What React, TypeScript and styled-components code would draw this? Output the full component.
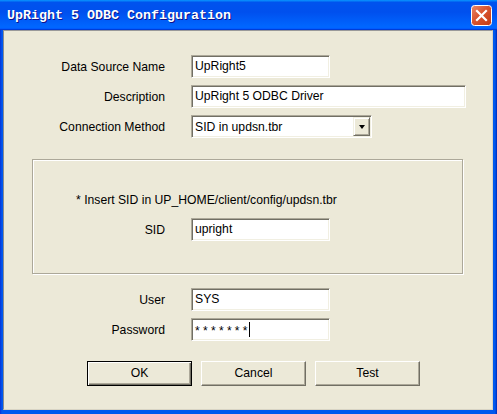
import React from 'react';
import styled, { createGlobalStyle } from 'styled-components';

const GlobalStyle = createGlobalStyle`
    html, body {
        margin: 0;
        padding: 0;
        background: #ffffff;
    }
    body {
        font-family: "Liberation Sans", Arial, sans-serif;
        font-size: 12.2px;
        color: #000;
    }
`;

const Window = styled.div`
    width: 497px;
    height: 414px;
    display: flex;
    flex-direction: column;
    box-sizing: border-box;
    background: #0846d8;
    box-shadow: inset 1px 0 #0a2fb8, inset -1px 0 #001a9e, inset 0 -1px #001a9e;
`;

const TitleBar = styled.div`
    height: 30px;
    flex: none;
    display: flex;
    align-items: center;
    justify-content: space-between;
    padding: 0 5px 0 7px;
    box-sizing: border-box;
    background: linear-gradient(
        180deg,
        #0997ff,
        #0053ee 8%,
        #0050ee 40%,
        #0066ff 88%,
        #0066ff 93%,
        #005bff 95%,
        #003dd7 96%,
        #003dd7
    );
`;

const Title = styled.span`
    font-family: "Liberation Mono", "Courier New", monospace;
    font-weight: bold;
    font-size: 13.33px;
    color: #ffffff;
    text-shadow: 1px 1px #0f1089;
    padding-top: 1px;
`;

const CloseButton = styled.div`
    width: 21px;
    height: 21px;
    display: flex;
    margin-top: 1px;
`;

const Frame = styled.div`
    flex: 1;
    display: flex;
    padding: 0 4px 4px 3px;
    background: linear-gradient(90deg, #0831d9, #0058ee 2px, #0058ee calc(100% - 2px), #0029b8);
`;

const Client = styled.div`
    flex: 1;
    display: flex;
    flex-direction: column;
    background: #ece9d8;
    border-left: 1px solid #8b8b8b;
    border-top: 1px solid #9a9a9a;
    border-right: 1px solid #d8d4c4;
    border-bottom: 1px solid #d8d4c4;
    padding-top: 24px;
`;

const FieldGrid = styled.div<{ $labelWidth: number }>`
    display: grid;
    grid-template-columns: ${({ $labelWidth }) => $labelWidth}px auto;
    column-gap: 26px;
    row-gap: 7px;
    align-items: center;
    justify-items: start;
`;

const Label = styled.div`
    justify-self: end;
    white-space: nowrap;
`;

const TextBox = styled.div<{ $width: number }>`
    width: ${({ $width }) => $width}px;
    height: 23px;
    box-sizing: border-box;
    display: flex;
    align-items: center;
    padding: 0 3px 1px;
    background: #ffffff;
    border: 1px solid;
    border-color: #aca899 #ffffff #ffffff #aca899;
    box-shadow: inset 1px 1px #716f64, inset -1px -1px #f1efe2;
    white-space: nowrap;
`;

const Masked = styled.span`
    letter-spacing: 3.3px;
    font-size: 12px;
    padding-top: 3px;
`;

const Caret = styled.span`
    width: 1px;
    height: 15px;
    background: #000;
    margin-left: -2px;
`;

const Combo = styled(TextBox)`
    justify-content: space-between;
    padding: 0 1px 0 3px;
`;

const DropButton = styled.div`
    width: 17px;
    height: 19px;
    box-sizing: border-box;
    display: flex;
    align-items: center;
    justify-content: center;
    background: #ece9d8;
    border: 1px solid;
    border-color: #f1efe2 #716f64 #716f64 #f1efe2;
    box-shadow: inset 1px 1px #ffffff, inset -1px -1px #aca899;
`;

const Arrow = styled.div`
    width: 0;
    height: 0;
    border-left: 3.5px solid transparent;
    border-right: 3.5px solid transparent;
    border-top: 4px solid #000;
    margin-top: 1px;
`;

const GroupBox = styled.div`
    margin: 21px 29px 0 28px;
    height: 115px;
    box-sizing: border-box;
    border: 1px solid #aca899;
    box-shadow: inset 1px 1px #ffffff, 1px 1px #ffffff;
    padding-top: 33px;
    display: flex;
    flex-direction: column;
`;

const Note = styled.div`
    padding-left: 43px;
    line-height: 14px;
    margin-bottom: 11px;
    white-space: nowrap;
`;

const Section = styled.div<{ $top: number }>`
    margin-top: ${({ $top }) => $top}px;
`;

const ButtonBar = styled.div`
    display: flex;
    gap: 9px;
    margin: 20px 0 0 83px;
`;

const PushButton = styled.div<{ $default?: boolean }>`
    width: 105px;
    height: 25px;
    box-sizing: border-box;
    display: flex;
    align-items: center;
    justify-content: center;
    background: #ece9d8;
    border: 1px solid;
    border-color: ${({ $default }) =>
        $default ? '#000000' : '#ffffff #716f64 #716f64 #ffffff'};
    box-shadow: ${({ $default }) =>
        $default
            ? 'inset 1px 1px #ffffff, inset -1px -1px #716f64, inset -2px -2px #aca899'
            : 'inset -1px -1px #aca899'};
    padding-bottom: 1px;
`;

const CloseIcon = () => (
    <svg width="21" height="21" viewBox="0 0 21 21">
        <defs>
            <linearGradient id="closeFill" x1="0" y1="0" x2="1" y2="1">
                <stop offset="0" stopColor="#e8896a" />
                <stop offset="0.45" stopColor="#d9552f" />
                <stop offset="1" stopColor="#c23a14" />
            </linearGradient>
        </defs>
        <rect x="0.5" y="0.5" width="20" height="20" rx="3" fill="url(#closeFill)" stroke="#ffffff" />
        <path d="M6 6 L15 15 M15 6 L6 15" stroke="#ffffff" strokeWidth="2.2" strokeLinecap="square" />
    </svg>
);

const App: React.FC = () => {
    return (
        <>
            <GlobalStyle />
            <Window>
                <TitleBar>
                    <Title>UpRight 5 ODBC Configuration</Title>
                    <CloseButton>
                        <CloseIcon />
                    </CloseButton>
                </TitleBar>
                <Frame>
                    <Client>
                        <FieldGrid $labelWidth={161}>
                            <Label>Data Source Name</Label>
                            <TextBox $width={139}>UpRight5</TextBox>
                            <Label>Description</Label>
                            <TextBox $width={275}>UpRight 5 ODBC Driver</TextBox>
                            <Label>Connection Method</Label>
                            <Combo $width={181}>
                                <span>SID in updsn.tbr</span>
                                <DropButton>
                                    <Arrow />
                                </DropButton>
                            </Combo>
                        </FieldGrid>
                        <GroupBox>
                            <Note>* Insert SID in UP_HOME/client/config/updsn.tbr</Note>
                            <FieldGrid $labelWidth={132}>
                                <Label>SID</Label>
                                <TextBox $width={139}>upright</TextBox>
                            </FieldGrid>
                        </GroupBox>
                        <Section $top={14}>
                            <FieldGrid $labelWidth={161}>
                                <Label>User</Label>
                                <TextBox $width={139}>SYS</TextBox>
                                <Label>Password</Label>
                                <TextBox $width={139}>
                                    <Masked>*******</Masked>
                                    <Caret />
                                </TextBox>
                            </FieldGrid>
                        </Section>
                        <ButtonBar>
                            <PushButton $default>OK</PushButton>
                            <PushButton>Cancel</PushButton>
                            <PushButton>Test</PushButton>
                        </ButtonBar>
                    </Client>
                </Frame>
            </Window>
        </>
    );
};

export default App;
